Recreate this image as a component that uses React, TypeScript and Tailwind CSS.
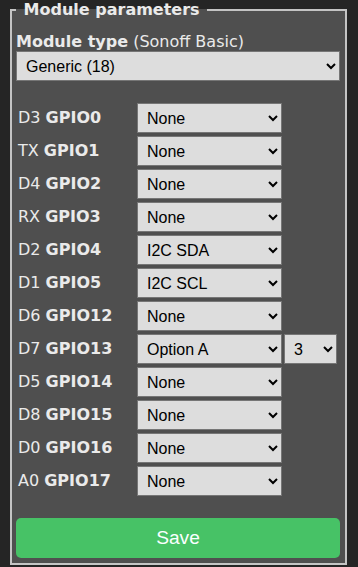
import React from "react";

const rows: [string, string, string, string?][] = [
  ["D3", "GPIO0", "None"],
  ["TX", "GPIO1", "None"],
  ["D4", "GPIO2", "None"],
  ["RX", "GPIO3", "None"],
  ["D2", "GPIO4", "I2C SDA"],
  ["D1", "GPIO5", "I2C SCL"],
  ["D6", "GPIO12", "None"],
  ["D7", "GPIO13", "Option A", "3"],
  ["D5", "GPIO14", "None"],
  ["D8", "GPIO15", "None"],
  ["D0", "GPIO16", "None"],
  ["A0", "GPIO17", "None"],
];

const options = ["None", "I2C SDA", "I2C SCL", "Option A", "Relay1", "Button1", "Led1"];

export default function App() {
  return (
    <div className="min-h-[567px] bg-[#252525] font-['DejaVu_Sans',Verdana,sans-serif] text-[16px] text-[#eaeaea]">
      <fieldset className="ml-[10px] w-[337px] border-2 border-[#c4c4c4] bg-[#4f4f4f] pb-[5px] pl-[4px] pr-[5px]">
        <legend className="px-[2px] font-bold leading-[19px]">{"\u00a0Module parameters\u00a0"}</legend>
        <div className="mt-[14px] leading-[18px]">
          <b>Module type</b> (Sonoff Basic)
        </div>
        <select
          defaultValue="Generic (18)"
          className="block h-[30px] w-full border border-[#767676] bg-[#dddddd] pl-[5px] pr-[3px] font-['Liberation_Sans',Arial,sans-serif] text-[16px] text-black"
        >
          <option>Generic (18)</option>
          <option>Sonoff Basic (1)</option>
        </select>
        <div className="mt-[22px] flex flex-col gap-[3px]">
          {rows.map(([pin, gpio, val, extra]) => (
            <div key={gpio} className="flex h-[30px] items-center">
              <div className="ml-[2px] w-[119px] whitespace-nowrap">
                {pin} <b>{gpio}</b>
              </div>
              <select
                defaultValue={val}
                className="h-[30px] w-[145px] border border-[#767676] bg-[#dddddd] pl-[5px] pr-[3px] font-['Liberation_Sans',Arial,sans-serif] text-[16px] text-black"
              >
                {options.map((o) => (
                  <option key={o}>{o}</option>
                ))}
              </select>
              {extra && (
                <select
                  defaultValue={extra}
                  className="ml-[2px] h-[30px] w-[53px] border border-[#767676] bg-[#dddddd] pl-[5px] pr-[3px] font-['Liberation_Sans',Arial,sans-serif] text-[16px] text-black"
                >
                  {["1", "2", "3", "4"].map((o) => (
                    <option key={o}>{o}</option>
                  ))}
                </select>
              )}
            </div>
          ))}
        </div>
        <button
          type="button"
          className="mt-[22px] block h-[40px] w-full rounded-[5px] bg-[#47c266] font-['Liberation_Sans',Arial,sans-serif] text-[19.2px] text-[#faffff]"
        >
          Save
        </button>
      </fieldset>
    </div>
  );
}
